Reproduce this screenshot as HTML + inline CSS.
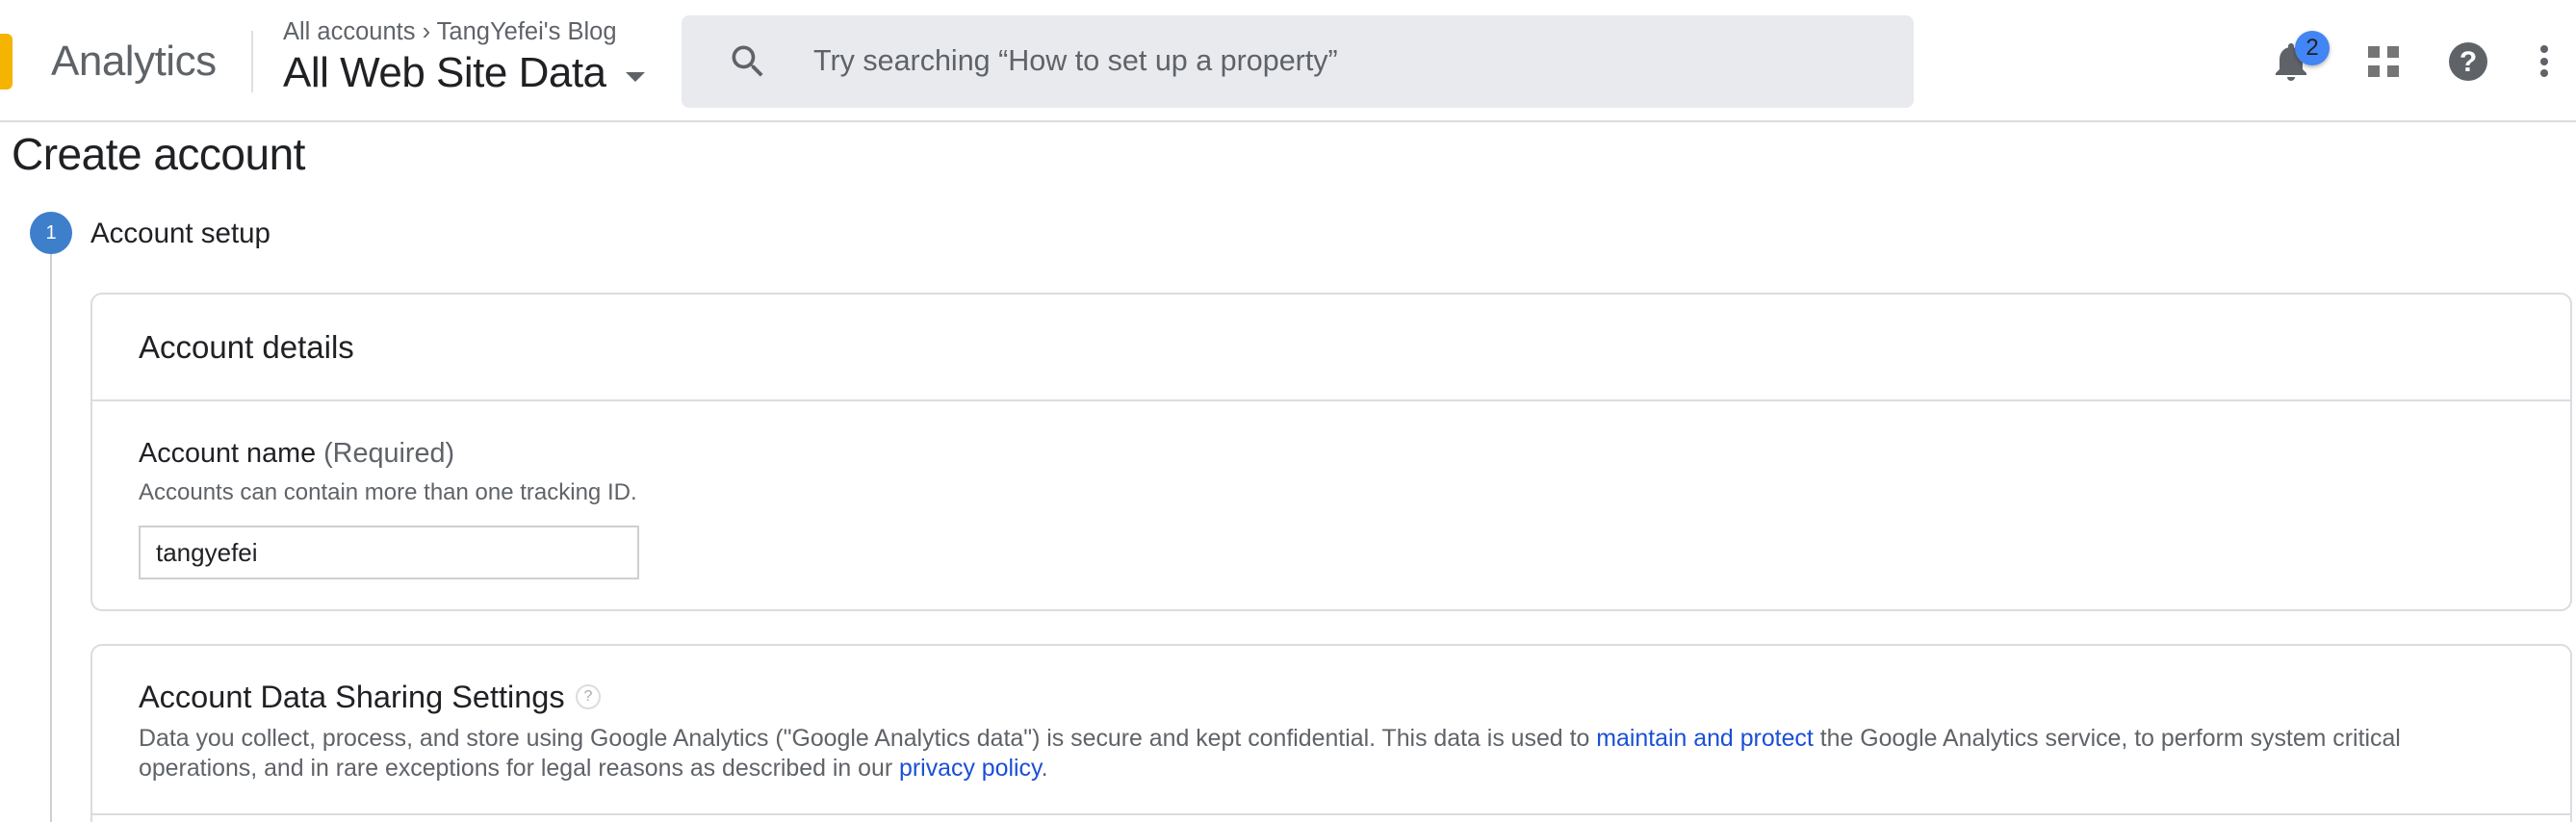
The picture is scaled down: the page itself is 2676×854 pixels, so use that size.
<!DOCTYPE html>
<html><head><meta charset="utf-8"><style>
*{margin:0;padding:0;box-sizing:border-box}
html,body{width:2676px;height:854px;overflow:hidden}
body{background:#fff;font-family:"Liberation Sans",Arial,sans-serif;position:relative;color:#202124}
.a{position:absolute;white-space:nowrap;line-height:1.2}
</style></head><body>
<div class="a" style="left:0;top:35px;width:13px;height:58px;background:#f4b400;border-radius:0 6px 6px 0"></div>
<div class="a" style="left:53px;top:38px;font-size:44px;color:#5f6368;letter-spacing:-0.5px">Analytics</div>
<div class="a" style="left:261px;top:32px;width:2px;height:64px;background:#e0e0e0"></div>
<div class="a" style="left:294px;top:18px;font-size:25.5px;color:#5f6368">All accounts &#8250; TangYefei's Blog</div>
<div class="a" style="left:294px;top:50px;font-size:44px;color:#202124;letter-spacing:-0.5px">All Web Site Data</div>
<div class="a" style="left:650px;top:75px;width:0;height:0;border-left:10px solid transparent;border-right:10px solid transparent;border-top:10px solid #5f6368"></div>
<div class="a" style="left:708px;top:16px;width:1280px;height:96px;background:#e8eaed;border-radius:8px"></div>
<svg class="a" style="left:755px;top:42px" width="44" height="44" viewBox="0 0 24 24"><path fill="#5f6368" d="M15.5 14h-.79l-.28-.27A6.47 6.47 0 0 0 16 9.5 6.5 6.5 0 1 0 9.5 16c1.61 0 3.09-.59 4.23-1.57l.27.28v.79l5 4.99L20.49 19l-4.99-5zm-6 0C7.01 14 5 11.99 5 9.5S7.01 5 9.5 5 14 7.01 14 9.5 11.99 14 9.5 14z"/></svg>
<div class="a" style="left:845px;top:45px;font-size:30.5px;color:#5f6368">Try searching “How to set up a property”</div>
<svg class="a" style="left:2356px;top:40px" width="48" height="48" viewBox="0 0 24 24"><path fill="#5f6368" d="M12 22c1.1 0 2-.9 2-2h-4c0 1.1.9 2 2 2zm6-6v-5c0-3.07-1.63-5.64-4.5-6.32V4c0-.83-.67-1.5-1.5-1.5s-1.5.67-1.5 1.5v.68C7.64 5.36 6 7.92 6 11v5l-2 2v1h16v-1l-2-2z"/></svg>
<div class="a" style="left:2384px;top:32px;width:36px;height:36px;border-radius:50%;background:#4285f4;box-shadow:0 2px 4px rgba(0,0,0,.3);color:#202124;font-size:24px;text-align:center;line-height:36px">2</div>
<div class="a" style="left:2460px;top:48px;width:12px;height:12px;background:#757575"></div>
<div class="a" style="left:2480px;top:48px;width:12px;height:12px;background:#757575"></div>
<div class="a" style="left:2460px;top:68px;width:12px;height:12px;background:#757575"></div>
<div class="a" style="left:2480px;top:68px;width:12px;height:12px;background:#757575"></div>
<div class="a" style="left:2544px;top:44px;width:40px;height:40px;border-radius:50%;background:#5f6368;color:#fff;font-weight:bold;font-size:30px;text-align:center;line-height:41px">?</div>
<div class="a" style="left:2639px;top:47px;width:8px;height:8px;border-radius:50%;background:#5f6368"></div>
<div class="a" style="left:2639px;top:60px;width:8px;height:8px;border-radius:50%;background:#5f6368"></div>
<div class="a" style="left:2639px;top:72px;width:8px;height:8px;border-radius:50%;background:#5f6368"></div>
<div class="a" style="left:0;top:125px;width:2676px;height:2px;background:#dadce0"></div>
<div class="a" style="left:12px;top:133px;font-size:46px;color:#202124;letter-spacing:-0.5px">Create account</div>
<div class="a" style="left:52px;top:262px;width:2px;height:592px;background:#d0d0d0"></div>
<div class="a" style="left:31px;top:220px;width:44px;height:44px;border-radius:50%;background:#3d7fcb;color:#fff;font-size:20px;text-align:center;line-height:44px">1</div>
<div class="a" style="left:94px;top:225px;font-size:29.5px;font-weight:500;color:#202124">Account setup</div>
<div class="a" style="left:94px;top:304px;width:2578px;height:331px;border:2px solid #dadce0;border-radius:12px"></div>
<div class="a" style="left:96px;top:415px;width:2574px;height:2px;background:#dadce0"></div>
<div class="a" style="left:144px;top:341px;font-size:33px;color:#202124">Account details</div>
<div class="a" style="left:144px;top:454px;font-size:28.8px;color:#202124">Account name <span style="color:#5f6368">(Required)</span></div>
<div class="a" style="left:144px;top:498px;font-size:24px;color:#5f6368">Accounts can contain more than one tracking ID.</div>
<div class="a" style="left:144px;top:546px;width:520px;height:56px;border:2px solid #cfcfcf"></div>
<div class="a" style="left:162px;top:559px;font-size:26px;color:#202124">tangyefei</div>
<div class="a" style="left:94px;top:669px;width:2578px;height:185px;border:2px solid #dadce0;border-bottom:none;border-radius:12px 12px 0 0"></div>
<div class="a" style="left:96px;top:845px;width:2574px;height:2px;background:#dadce0"></div>
<div class="a" style="left:144px;top:705px;font-size:32.5px;color:#202124">Account Data Sharing Settings</div>
<div class="a" style="left:598px;top:711px;width:26px;height:26px;border-radius:50%;border:2px solid #ddd;color:#aaa;font-size:16px;text-align:center;line-height:22px">?</div>
<div class="a" style="left:144px;top:752px;font-size:24.9px;line-height:31px;color:#5f6368">Data you collect, process, and store using Google Analytics ("Google Analytics data") is secure and kept confidential. This data is used to <span style="color:#1a4fd6">maintain and protect</span> the Google Analytics service, to perform system critical<br>operations, and in rare exceptions for legal reasons as described in our <span style="color:#1a4fd6">privacy policy</span>.</div>
</body></html>
